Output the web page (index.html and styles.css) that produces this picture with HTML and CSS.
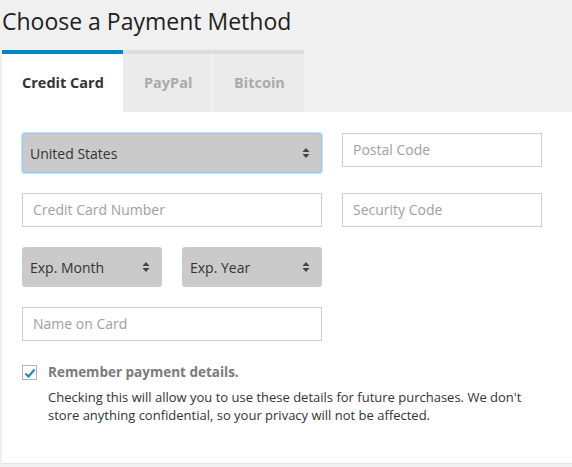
FILE: index.html
```html
<!DOCTYPE html>
<html lang="en">
<head>
<meta charset="utf-8">
<title>Choose a Payment Method</title>
<link rel="stylesheet" href="styles.css">
</head>
<body>
<div class="page">
  <h1 class="title">Choose a Payment Method</h1>
  <div class="tabs">
    <div class="tab active">Credit Card</div>
    <div class="tab tab-paypal">PayPal</div>
    <div class="tab tab-bitcoin">Bitcoin</div>
  </div>
  <div class="panel">
    <div class="row">
      <div class="select focus w300"><span>United States</span><svg class="arrows" width="8" height="12" viewBox="0 0 8 12"><path d="M4 1 L7.5 5 H0.5 Z M4 11 L7.5 7 H0.5 Z" fill="#444"/></svg></div>
      <div class="input w200">Postal Code</div>
    </div>
    <div class="row">
      <div class="input w300">Credit Card Number</div>
      <div class="input w200">Security Code</div>
    </div>
    <div class="row">
      <div class="select w140"><span>Exp. Month</span><svg class="arrows" width="8" height="12" viewBox="0 0 8 12"><path d="M4 1 L7.5 5 H0.5 Z M4 11 L7.5 7 H0.5 Z" fill="#444"/></svg></div>
      <div class="select w140"><span>Exp. Year</span><svg class="arrows" width="8" height="12" viewBox="0 0 8 12"><path d="M4 1 L7.5 5 H0.5 Z M4 11 L7.5 7 H0.5 Z" fill="#444"/></svg></div>
    </div>
    <div class="row">
      <div class="input w300">Name on Card</div>
    </div>
    <div class="remember">
      <div class="checkbox"><svg width="12" height="10" viewBox="0 0 12 10"><path d="M1.5 5.5 L4.5 8.5 L10.5 1.5" fill="none" stroke="#1a8bc8" stroke-width="2.2"/></svg></div>
      <div class="remember-text">
        <div class="remember-label">Remember payment details.</div>
        <p class="remember-note">Checking this will allow you to use these details for future purchases. We don't store anything confidential, so your privacy will not be affected.</p>
      </div>
    </div>
  </div>
</div>
</body>
</html>
```
FILE: styles.css
```css
html, body {
  margin: 0;
  padding: 0;
  background: #f0f0f0;
  font-family: "Open Sans", "DejaVu Sans", sans-serif;
  color: #333;
}
.page {
  padding-left: 2px;
}
.title {
  margin: 0;
  height: 50px;
  font-size: 23px;
  font-weight: 400;
  color: #1e1e1e;
  line-height: 42px;
}
.tabs {
  display: flex;
}
.tab {
  box-sizing: border-box;
  height: 62px;
  border-top: 4px solid #dcdcdc;
  background: #ebebeb;
  color: #aaa;
  font-size: 14.5px;
  font-weight: 700;
  line-height: 57px;
  white-space: nowrap;
  padding-left: 21px;
}
.tab.active {
  background: #fff;
  color: #333;
  border-top-color: #0088c2;
  padding-left: 20px;
  width: 121px;
}
.tab-paypal {
  width: 90px;
  border-right: 1px solid #f6f6f6;
}
.tab-bitcoin {
  width: 91px;
}
.panel {
  box-sizing: border-box;
  height: 352px;
  background: #fff;
  border-bottom: 1px solid #dfe6ee;
  padding: 21px 20px 20px 20px;
}
.row {
  display: flex;
  align-items: flex-start;
  gap: 20px;
  margin-bottom: 20px;
}
.w300 { width: 300px; }
.w200 { width: 200px; }
.w140 { width: 140px; }
.input {
  box-sizing: border-box;
  height: 34px;
  border: 1px solid #cfcfcf;
  background: #fff;
  color: #a0a0a0;
  font-size: 14px;
  line-height: 32px;
  padding-left: 10px;
}
.select {
  box-sizing: border-box;
  height: 40px;
  background: #cacaca;
  border-radius: 3px;
  color: #333;
  font-size: 14px;
  display: flex;
  align-items: center;
  justify-content: space-between;
  padding: 0 12px 0 8px;
}
.select.focus {
  border: 1px solid #9cc9ef;
  box-shadow: 0 0 1px 1px #c4e0f7;
  padding-left: 7px;
  padding-right: 11px;
}
.arrows {
  display: block;
}
.remember {
  display: flex;
  gap: 11px;
  margin-top: 24px;
}
.checkbox {
  box-sizing: border-box;
  flex: none;
  width: 15px;
  height: 15px;
  border: 1px solid #b5b5b5;
  background: #fff;
  display: flex;
  align-items: center;
  justify-content: center;
}
.remember-label {
  font-size: 13.5px;
  font-weight: 700;
  color: #7a7a7a;
  line-height: 14px;
}
.remember-note {
  margin: 9px 0 0 0;
  font-size: 13px;
  line-height: 18px;
  color: #333;
  width: 490px;
}
```
